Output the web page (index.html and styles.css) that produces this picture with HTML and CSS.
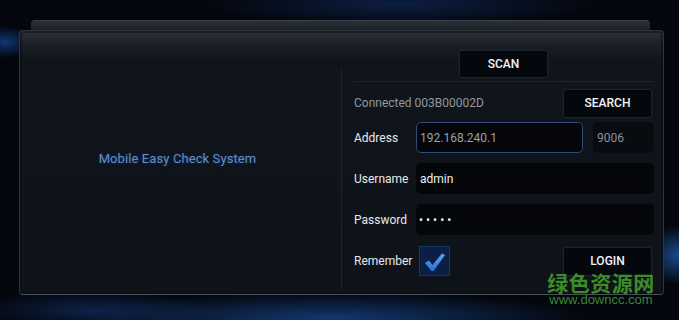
FILE: index.html
```html
<!DOCTYPE html>
<html>
<head>
<meta charset="utf-8">
<link rel="stylesheet" href="styles.css">
</head>
<body>
<div class="screen">
  <div class="back-panel"></div>
  <div class="panel">
    <div class="left">
      <div class="title">Mobile Easy Check System</div>
    </div>
    <div class="right">
      <div class="scan-wrap"><div class="btn scan">SCAN</div></div>
      <div class="form">
        <div class="row first">
          <div class="status">Connected 003B00002D</div>
          <div class="btn search">SEARCH</div>
        </div>
        <div class="row">
          <div class="label">Address</div>
          <div class="field addr focus">192.168.240.1</div>
          <div class="field port">9006</div>
        </div>
        <div class="row">
          <div class="label">Username</div>
          <div class="field wide val">admin</div>
        </div>
        <div class="row">
          <div class="label">Password</div>
          <div class="field wide val dots">•••••</div>
        </div>
        <div class="row last">
          <div class="label">Remember</div>
          <div class="check">
            <svg width="22" height="20" viewBox="0 0 22 20"><defs><linearGradient id="g" x1="0" y1="0" x2="0" y2="1"><stop offset="0" stop-color="#5aa8f5"/><stop offset="1" stop-color="#2a6fd0"/></linearGradient></defs><path d="M1 11 L5 8.5 L8.5 13 L18 1.5 L21 3 L9.5 19 L7.5 19 Z" fill="url(#g)"/></svg>
          </div>
          <div class="spacer"></div>
          <div class="btn login">LOGIN</div>
        </div>
      </div>
    </div>
  </div>
  <div class="watermark">
    <div class="wm-cn">绿色资源网</div>
    <div class="wm-url">www.downcc.com</div>
  </div>
</div>
</body>
</html>
```

FILE: styles.css
```css
* { box-sizing: border-box; }
html, body { margin: 0; padding: 0; }
body {
  width: 679px;
  height: 320px;
  overflow: hidden;
  font-family: Roboto, "Noto Sans", sans-serif;
  background:
    radial-gradient(ellipse 30px 16px at 5px 42px, rgba(20,70,150,0.75), rgba(20,70,150,0) 100%),
    radial-gradient(ellipse 260px 26px at 330px 318px, rgba(25,75,150,0.7), rgba(25,75,150,0) 100%),
    radial-gradient(ellipse 120px 20px at 90px 310px, rgba(20,50,110,0.6), rgba(20,50,110,0) 100%),
    radial-gradient(ellipse 40px 30px at 679px 255px, rgba(40,100,190,0.7), rgba(40,100,190,0) 100%),
    radial-gradient(ellipse 200px 22px at 400px 4px, rgba(20,50,110,0.55), rgba(20,50,110,0) 100%),
    #03060c;
}
.screen {
  position: relative;
  width: 679px;
  height: 320px;
  padding-top: 20px;
}
.back-panel {
  margin-left: 31px;
  width: 619px;
  height: 10px;
  border-radius: 4px 4px 0 0;
  background: linear-gradient(#2b2f36, #1d2128);
  border-top: 1px solid #3a3e45;
}
.panel {
  margin-left: 19px;
  width: 645px;
  height: 265px;
  border-radius: 4px;
  border: 1px solid #30353d;
  border-bottom-color: #4a4f57;
  background: linear-gradient(#2c3038 0px, #1a1e25 14px, #10141b 30px, #0e1219 100%);
  display: grid;
  grid-template-columns: 321px 1fr;
  box-shadow: inset 0 0 0 2px rgba(10,12,16,0.5);
}
.left {
  display: flex;
  align-items: center;
  justify-content: center;
  padding-bottom: 8px;
  padding-right: 6px;
}
.title {
  color: #5d8fd2;
  font-size: 13px;
  letter-spacing: 0.1px;
  text-shadow: 0 0 3px rgba(60,110,200,0.35);
}
.right {
  border-left: 1px solid #20252c;
  margin-top: 38px;
  margin-bottom: 4px;
  position: relative;
}
.scan-wrap {
  display: flex;
  justify-content: center;
  margin-top: -19px;
  padding-left: 8px;
  padding-right: 6px;
}
.btn {
  background: #04070c;
  border: 1px solid #1b2330;
  border-radius: 3px;
  color: #f2f4f6;
  font-size: 12px;
  font-weight: 500;
  display: flex;
  align-items: center;
  justify-content: center;
  box-shadow: 0 0 2px rgba(60,90,140,0.25);
}
.scan { width: 89px; height: 28px; }
.form {
  margin: 3px 9px 0 12px;
  border-top: 1px solid #1f242b;
  padding-top: 6px;
}
.row {
  display: flex;
  align-items: center;
  height: 31px;
  margin-top: 10px;
}
.row.first { margin-top: 0; height: 29px; padding-top: 1px; }
.row:nth-child(2) { margin-top: 5px; }
.row.last { margin-top: 10px; height: 30px; padding-top: 2px; }
.status {
  flex: 1;
  color: #9298a0;
  font-size: 12px;
}
.search { width: 89px; height: 29px; margin-right: 2px; }
.label {
  width: 62px;
  color: #e6e9ec;
  font-size: 12px;
}
.field {
  height: 31px;
  border-radius: 5px;
  background: #04060a;
  font-size: 12px;
  display: flex;
  align-items: center;
  padding-left: 4px;
}
.addr {
  width: 167px;
  color: #9aa1a9;
  border: 1px solid #2f4c78;
  padding-left: 3px;
}
.port {
  width: 61px;
  margin-left: 10px;
  color: #8a9199;
  background: #080b10;
}
.wide { flex: 1; }
.val { color: #eef0f2; }
.dots { letter-spacing: 3px; font-size: 12px; padding-left: 3px; }
.check {
  width: 31px;
  height: 30px;
  margin-left: 3px;
  background: #0b1f46;
  border: 1px solid #163463;
  display: flex;
  align-items: center;
  justify-content: center;
  padding-top: 2px;
}
.spacer { flex: 1; }
.login { width: 89px; height: 29px; margin-right: 2px; }
.watermark {
  position: absolute;
  left: 545px;
  top: 272px;
  width: 112px;
  text-align: center;
}
.wm-cn {
  color: #3d8b29;
  font-family: "Noto Sans CJK SC", sans-serif;
  font-weight: 700;
  font-size: 21px;
  line-height: 21px;
  letter-spacing: 0.5px;
}
.wm-url {
  color: #3a8630;
  font-family: "Liberation Sans", sans-serif;
  font-size: 13px;
  line-height: 13px;
}
```
